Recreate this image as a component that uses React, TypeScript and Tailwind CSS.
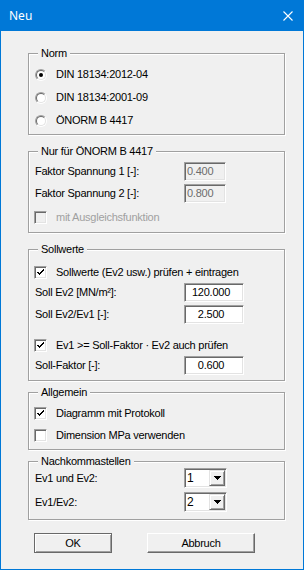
import type { ReactNode } from "react";

const BEVEL_IN =
  "border border-t-[#a0a0a0] border-l-[#a0a0a0] border-b-white border-r-white shadow-[inset_1px_1px_0_#696969,inset_-1px_-1px_0_#e3e3e3]";

function Group({
  label,
  className,
  children,
}: {
  label: string;
  className: string;
  children: ReactNode;
}) {
  return (
    <div
      className={`relative w-[257px] border border-[#a0a0a0] shadow-[inset_1px_1px_0_#fff,1px_1px_0_#fff] ${className}`}
    >
      <span className="absolute -top-[7px] left-[9px] bg-[#f0f0f0] px-[3px] leading-[13px]">
        {label}
      </span>
      {children}
    </div>
  );
}

function Radio({ checked }: { checked?: boolean }) {
  return (
    <span className="relative flex h-[12px] w-[12px] shrink-0 items-center justify-center rounded-full border border-t-[#a0a0a0] border-l-[#a0a0a0] border-b-white border-r-white">
      <span className="flex h-[10px] w-[10px] items-center justify-center rounded-full border border-t-[#696969] border-l-[#696969] border-b-[#e3e3e3] border-r-[#e3e3e3] bg-white">
        {checked && <span className="h-[4px] w-[4px] rounded-full bg-black" />}
      </span>
    </span>
  );
}

function Checkbox({ checked, disabled }: { checked?: boolean; disabled?: boolean }) {
  return (
    <span
      className={`flex h-[13px] w-[13px] shrink-0 items-center justify-center ${BEVEL_IN} ${disabled ? "bg-[#f0f0f0]" : "bg-white"}`}
    >
      {checked && (
        <svg width="7" height="7" viewBox="0 0 7 7" shapeRendering="crispEdges">
          <path d="M0 2h1v3h1v1h1v-1h1v-1h1v-1h1v-1h1v-2h-1v1h-1v1h-1v1h-1v1h-1v-1h-1v-1z" fill="#000" />
          <path d="M0 3h1v1h-1zM2 5h1v1h-1z" fill="#000" />
        </svg>
      )}
    </span>
  );
}

function Field({
  value,
  disabled,
  className,
}: {
  value: string;
  disabled?: boolean;
  className: string;
}) {
  return (
    <span
      className={`flex h-[19px] items-center ${BEVEL_IN} ${className} ${
        disabled ? "bg-[#f0f0f0] pl-[2px] text-[#6d6d6d]" : "justify-center bg-white pr-[6px]"
      }`}
    >
      {value}
    </span>
  );
}

function Dropdown({ value }: { value: string }) {
  return (
    <span className={`flex h-[20px] w-[43px] items-center bg-white ${BEVEL_IN}`}>
      <span className="flex-1 pl-[2px] text-[12px]">{value}</span>
      <span className="mr-[1px] flex h-[16px] w-[16px] items-center justify-center border border-t-[#e3e3e3] border-l-[#e3e3e3] border-b-[#696969] border-r-[#696969] bg-[#f0f0f0] shadow-[inset_1px_1px_0_#fff,inset_-1px_-1px_0_#a0a0a0]">
        <svg width="7" height="4" viewBox="0 0 7 4" shapeRendering="crispEdges">
          <path d="M0 0h7v1h-1v1h-1v1h-1v1h-1v-1h-1v-1h-1v-1h-1z" fill="#000" />
        </svg>
      </span>
    </span>
  );
}

function Row({ children, className = "" }: { children: ReactNode; className?: string }) {
  return <div className={`flex items-center pl-[6px] ${className}`}>{children}</div>;
}

function CheckRow({
  label,
  checked,
  disabled,
  className = "",
}: {
  label: string;
  checked?: boolean;
  disabled?: boolean;
  className?: string;
}) {
  return (
    <div className={`flex items-center gap-[9px] pl-[5px] ${className}`}>
      <Checkbox checked={checked} disabled={disabled} />
      <span className={disabled ? "text-[#a0a0a0]" : ""}>{label}</span>
    </div>
  );
}

const NORMS = [
  { id: "2012", label: "DIN 18134:2012-04", checked: true },
  { id: "2001", label: "DIN 18134:2001-09" },
  { id: "onorm", label: "ÖNORM B 4417" },
];

export default function App() {
  return (
    <div className="flex h-[570px] w-[304px] flex-col border border-t-0 border-[#0078d7] bg-[#f0f0f0] font-['Liberation_Sans',Arial,sans-serif] text-[11px] leading-[13px] tracking-[-0.25px] text-black">
      <div className="-mx-px flex h-[31px] shrink-0 items-center justify-between bg-[#0078d7] pl-[9px] pr-[11px] font-['Noto_Sans',sans-serif] text-[12px] tracking-normal text-white">
        <span>Neu</span>
        <svg width="10" height="10" viewBox="0 0 10 10">
          <path d="M0.5 0.5L9.5 9.5M9.5 0.5L0.5 9.5" stroke="#fff" strokeWidth="1.1" />
        </svg>
      </div>

      <div className="flex flex-col pl-[27px]">
        <Group label="Norm" className="mt-[22px] h-[82px] pt-[9px]">
          {NORMS.map((n) => (
            <div key={n.id} className="flex h-[23px] items-center gap-[9px] pl-[6px]">
              <Radio checked={n.checked} />
              <span>{n.label}</span>
            </div>
          ))}
        </Group>

        <Group label="Nur für ÖNORM B 4417" className="mt-[16px] h-[82px] pt-[8px]">
          <Row className="h-[22px]">
            <span className="w-[149px]">Faktor Spannung 1 [-]:</span>
            <Field value="0.400" disabled className="w-[42px]" />
          </Row>
          <Row className="h-[22px]">
            <span className="w-[149px]">Faktor Spannung 2 [-]:</span>
            <Field value="0.800" disabled className="w-[42px]" />
          </Row>
          <CheckRow label="mit Ausgleichsfunktion" disabled className="mt-[2px] h-[22px]" />
        </Group>

        <Group label="Sollwerte" className="mt-[16px] h-[132px] pt-[12px]">
          <CheckRow label="Sollwerte (Ev2 usw.) prüfen + eintragen" checked className="h-[20px]" />
          <Row className="h-[20px]">
            <span className="w-[149px]">Soll Ev2 [MN/m²]:</span>
            <Field value="120.000" className="w-[60px]" />
          </Row>
          <Row className="mt-[2px] h-[20px]">
            <span className="w-[149px]">Soll Ev2/Ev1 [-]:</span>
            <Field value="2.500" className="w-[60px]" />
          </Row>
          <CheckRow label="Ev1 >= Soll-Faktor · Ev2 auch prüfen" checked className="mt-[11px] h-[20px]" />
          <Row className="h-[20px]">
            <span className="w-[149px]">Soll-Faktor [-]:</span>
            <Field value="0.600" className="w-[60px]" />
          </Row>
        </Group>

        <Group label="Allgemein" className="mt-[11px] h-[58px] pt-[9px]">
          <CheckRow label="Diagramm mit Protokoll" checked className="h-[22px]" />
          <CheckRow label="Dimension MPa verwenden" className="h-[22px]" />
        </Group>

        <Group label="Nachkommastellen" className="mt-[11px] h-[59px] pt-[4px]">
          <Row className="h-[24px]">
            <span className="w-[149px]">Ev1 und Ev2:</span>
            <Dropdown value="1" />
          </Row>
          <Row className="h-[24px]">
            <span className="w-[149px]">Ev1/Ev2:</span>
            <Dropdown value="2" />
          </Row>
        </Group>

        <div className="ml-[6px] mt-[13px] flex gap-[35px]">
          <button className="flex h-[20px] w-[78px] items-center justify-center border border-[#696969] bg-[#f0f0f0] shadow-[inset_1px_1px_0_#fff,inset_-1px_-1px_0_#a0a0a0]">
            OK
          </button>
          <button className="flex h-[20px] w-[108px] items-center justify-center border border-t-white border-l-white border-b-[#696969] border-r-[#696969] bg-[#f0f0f0] shadow-[inset_-1px_-1px_0_#a0a0a0]">
            Abbruch
          </button>
        </div>
      </div>
    </div>
  );
}
